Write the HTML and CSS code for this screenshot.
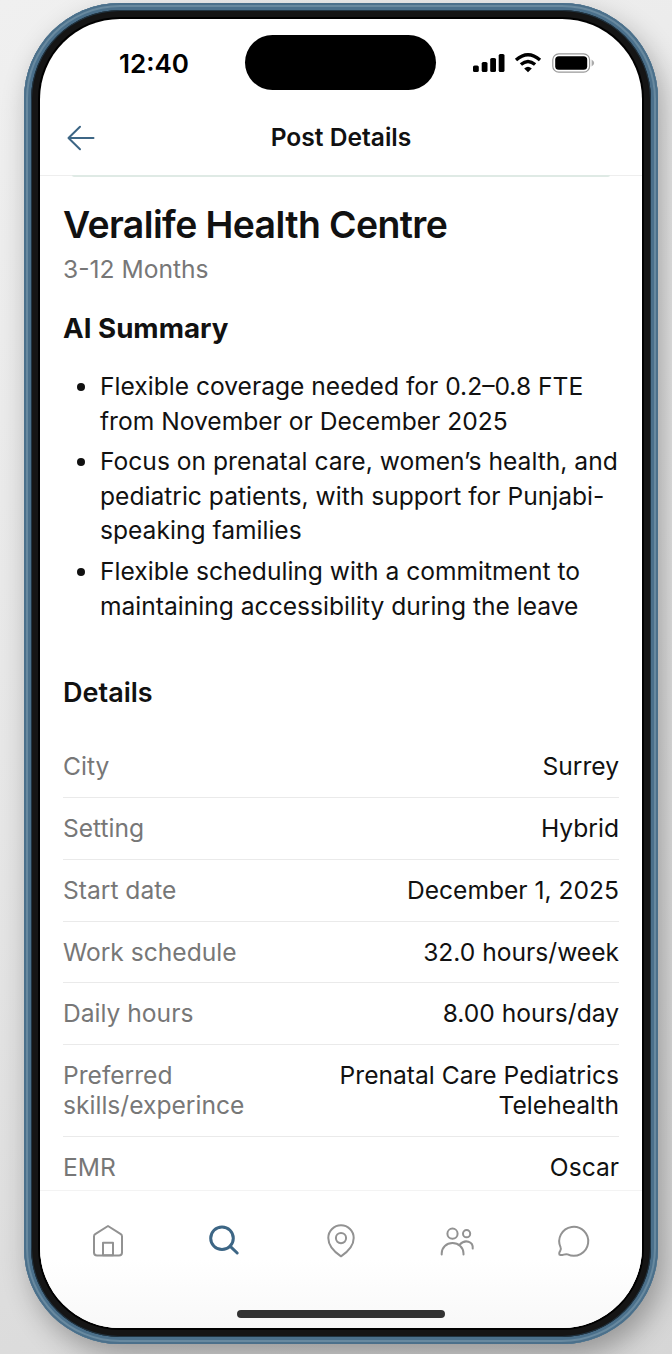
FILE: index.html
```html
<!DOCTYPE html>
<html lang="en">
<head>
    <meta charset="UTF-8">
    <meta name="viewport" content="width=device-width, initial-scale=1.0">
    <title>Post Details</title>
    <link rel="stylesheet" href="styles.css">
</head>
<body>
    <div class="phone">
        <div class="bezel">
            <div class="screen">
                <div class="status-bar">
                    <div class="time">12:40</div>
                    <div class="island"></div>
                    <div class="status-icons">
                        <svg width="32" height="20" viewBox="0 0 32 20">
                            <rect x="0" y="12.5" width="5.8" height="6.5" rx="1.6"/>
                            <rect x="8.7" y="9" width="5.8" height="10" rx="1.6"/>
                            <rect x="17.2" y="5" width="5.8" height="14" rx="1.6"/>
                            <rect x="25.7" y="1" width="5.8" height="18" rx="1.6"/>
                        </svg>
                        <svg class="wifi" width="28" height="20" viewBox="0 0 28 20">
                            <path d="M2 7Q14-3.4 26 7M6.9 11.5Q14 5.3 21.1 11.5" fill="none" stroke="#000" stroke-width="3.4"/>
                            <path d="M10.2 15.4Q14 12.3 17.8 15.4L14 19.2Z"/>
                        </svg>
                        <svg class="battery" width="43" height="20" viewBox="0 0 43 20">
                            <rect x=".8" y=".8" width="36.8" height="18.4" rx="6" fill="none" stroke="#999" stroke-width="1.2"/>
                            <rect x="3.2" y="3.2" width="32" height="13.6" rx="3.6"/>
                            <path d="M39.6 6.6Q42.2 8.2 42.2 10Q42.2 11.8 39.6 13.4Z" fill="#aaa"/>
                        </svg>
                    </div>
                </div>

                <div class="header">
                    <svg class="back" width="28" height="26" viewBox="0 0 28 26">
                        <path d="M26.5 13H1.5M13 1.8L1.5 13L13 24.2"/>
                    </svg>
                    <div class="header-title">Post Details</div>
                </div>

                <div class="content">
                    <div class="card-edge"></div>
                    <h1>Veralife Health Centre</h1>
                    <div class="duration">3-12 Months</div>
                    <h2 class="summary-title">AI Summary</h2>
                    <ul class="summary">
                        <li>Flexible coverage needed for 0.2–0.8 FTE<br>from November or December 2025</li>
                        <li>Focus on prenatal care, women’s health, and<br>pediatric patients, with support for Punjabi-<br>speaking families</li>
                        <li>Flexible scheduling with a commitment to<br>maintaining accessibility during the leave</li>
                    </ul>
                    <h2 class="details-title">Details</h2>
                    <div class="row"><span class="label">City</span><span class="value">Surrey</span></div>
                    <div class="row"><span class="label">Setting</span><span class="value">Hybrid</span></div>
                    <div class="row"><span class="label">Start date</span><span class="value">December 1, 2025</span></div>
                    <div class="row"><span class="label">Work schedule</span><span class="value">32.0 hours/week</span></div>
                    <div class="row"><span class="label">Daily hours</span><span class="value">8.00 hours/day</span></div>
                    <div class="row"><span class="label">Preferred<br>skills/experince</span><span class="value">Prenatal Care Pediatrics<br>Telehealth</span></div>
                    <div class="row"><span class="label">EMR</span><span class="value">Oscar</span></div>
                </div>

                <div class="tab-bar">
                    <div class="tabs">
                        <div class="tab">
                            <svg width="36" height="36" viewBox="0 0 36 36">
                                <path d="M4 13.5Q4 12 5.2 11.2L18 3L30.8 11.2Q32 12 32 13.5V29.5Q32 32.5 29 32.5H7Q4 32.5 4 29.5Z"/>
                                <path d="M13 32.3V19.8H23V32.3Z"/>
                            </svg>
                        </div>
                        <div class="tab active">
                            <svg width="36" height="36" viewBox="0 0 36 36">
                                <circle cx="15" cy="15.2" r="11.3"/>
                                <path d="M23 23.2L30.2 30"/>
                            </svg>
                        </div>
                        <div class="tab">
                            <svg width="36" height="36" viewBox="0 0 36 36">
                                <path d="M18 33.3C13 30 5.3 23 5.3 15A12.7 12.7 0 0 1 30.7 15C30.7 23 23 30 18 33.3Z"/>
                                <circle cx="18" cy="15.1" r="5.1"/>
                            </svg>
                        </div>
                        <div class="tab">
                            <svg width="36" height="36" viewBox="0 0 36 36">
                                <circle cx="13.5" cy="10.7" r="5.1"/>
                                <circle cx="27.6" cy="10.7" r="3.6"/>
                                <path d="M2.7 31.5V30.5C2.7 24.3 7.5 20 13.5 20S24.5 24.3 24.5 30.5V31.5M20.7 21.7C26 15.8 34.4 18.4 33.7 25.6"/>
                            </svg>
                        </div>
                        <div class="tab">
                            <svg width="36" height="36" viewBox="0 0 36 36">
                                <path d="M4.6 24.4A14.5 14.5 0 1 1 11.6 31.4C9.2 30.4 6.9 32.5 4.4 32C2.4 31.6 3.3 29.2 4.2 27.9C4.9 26.8 5.2 25.6 4.6 24.4Z"/>
                            </svg>
                        </div>
                    </div>
                    <div class="home-indicator"></div>
                </div>
            </div>
        </div>
    </div>
</body>
</html>
```

FILE: styles.css
```css
* {
    box-sizing: border-box;
}
body {
    margin: 0;
    height: 1354px;
    padding: 3px 0 0 24px;
    overflow: hidden;
    font-family: Inter, sans-serif;
    color: #111;
    background: linear-gradient(155deg, #f0f0f0, #e6e6e6 50%, #d6d6d6);
}
.phone {
    width: 634px;
    height: 1341px;
    padding: 7px;
    border-radius: 96px;
    background: #4b708b;
    box-shadow: inset 0 0 0 2px #4b708b, inset 0 0 0 4px #68899f, inset 0 0 0 6px #4b708b, 6px 12px 28px rgba(0, 0, 0, 0.3);
}
.bezel {
    height: 1327px;
    padding: 9px;
    border-radius: 89px;
    background: #151515;
    box-shadow: inset 0 0 0 1px #203442;
}
.screen {
    display: flex;
    flex-direction: column;
    height: 1309px;
    border-radius: 80px;
    overflow: hidden;
    background: #fff;
    box-shadow: 0 0 0 2px #000;
}

.status-bar {
    display: flex;
    height: 81px;
    padding: 16px 47px 0 79px;
}
.time {
    width: 126px;
    padding-top: 13px;
    font-size: 26px;
    line-height: 32px;
    font-weight: 600;
    color: #000;
}
.island {
    width: 191px;
    height: 55px;
    border-radius: 28px;
    background: #000;
}
.status-icons {
    display: flex;
    padding: 18px 0 0 37px;
}
.wifi {
    margin-left: 9px;
}
.battery {
    margin-left: 10px;
}

.header {
    display: flex;
    align-items: center;
    height: 76px;
    padding: 0 27px;
    border-bottom: 1px solid #eee;
}
.back {
    fill: none;
    stroke: #3d6685;
    stroke-width: 2;
    stroke-linecap: round;
    stroke-linejoin: round;
}
.header-title {
    flex: 1;
    margin: 0 28px 2px 0;
    text-align: center;
    font-size: 24.6px;
    font-weight: 600;
}

.content {
    flex: 1;
    min-height: 0;
    margin-top: -1px;
    overflow: hidden;
    padding: 0 23px;
}
.card-edge {
    height: 2px;
    margin: 0 9px;
    border-radius: 0 0 6px 6px;
    background: #dfeae5;
}
h1 {
    margin: 25px 0 0;
    font-size: 37.4px;
    line-height: 46px;
    letter-spacing: -0.6px;
    font-weight: 600;
}
.duration {
    margin-top: 6px;
    font-size: 24.6px;
    line-height: 30px;
    color: #777;
}
h2 {
    margin: 0;
    font-size: 27px;
    line-height: 34px;
    font-weight: 600;
}
.summary-title {
    margin-top: 27px;
    font-size: 27.7px;
    font-weight: 700;
}
.summary {
    margin: 24px 0 0;
    padding-left: 37px;
    font-size: 24.6px;
    line-height: 34.6px;
}
.summary li {
    margin-bottom: 6px;
}
.details-title {
    margin: 53px 0 26px;
}

.row {
    display: flex;
    justify-content: space-between;
    padding: 15px 0 15.8px;
    border-bottom: 1px solid #eaeaea;
    font-size: 24.6px;
    line-height: 30px;
}
.label {
    color: #777;
}
.value {
    text-align: right;
}

.tab-bar {
    height: 138px;
    border-top: 1px solid #f3f3f3;
    background: linear-gradient(#fff 50%, #f8f8f8);
}
.tabs {
    display: flex;
    padding: 32px 10px 0;
}
.tab {
    flex: 1;
    height: 36px;
    text-align: center;
}
.tab svg {
    fill: none;
    stroke: #929292;
    stroke-width: 2;
    stroke-linecap: round;
    stroke-linejoin: round;
}
.tab.active svg {
    stroke: #3d6685;
    stroke-width: 3;
}
.home-indicator {
    width: 208px;
    height: 8px;
    margin: 51px auto 0;
    border-radius: 4px;
    background: #333;
}
```
